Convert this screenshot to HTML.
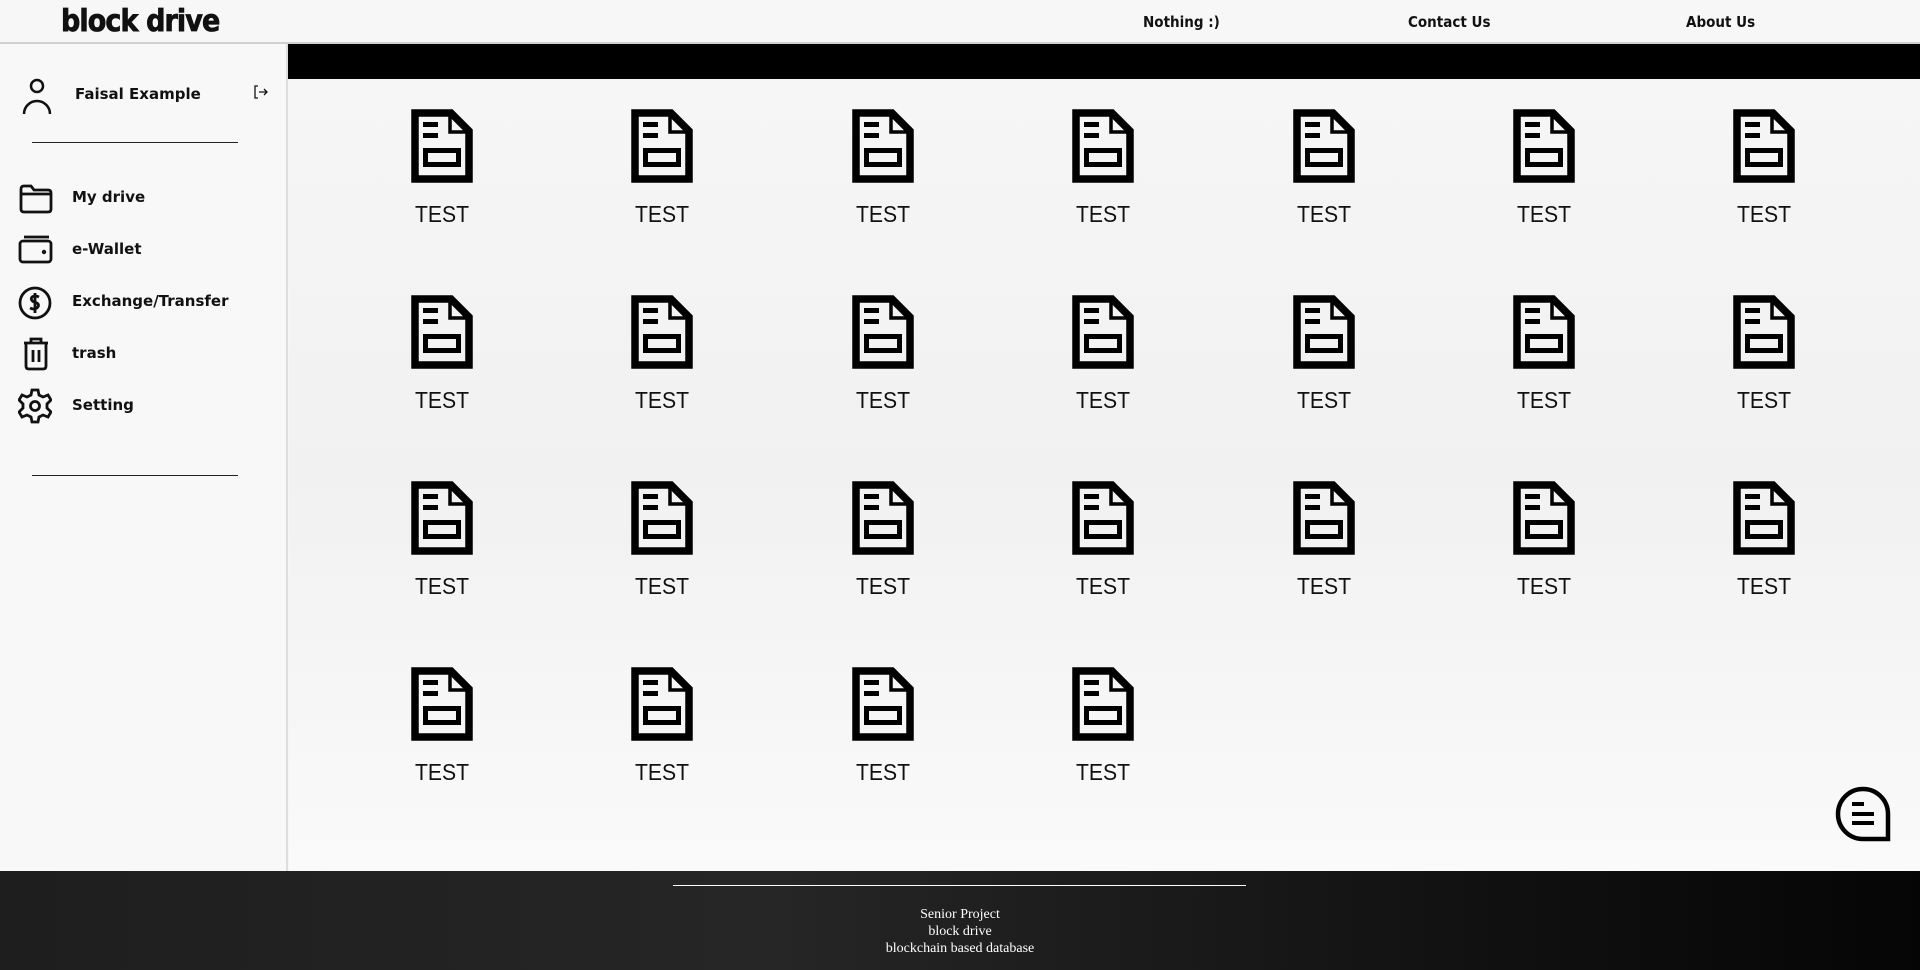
<!DOCTYPE html>
<html><head><meta charset="utf-8">
<style>
*{margin:0;padding:0;box-sizing:border-box}
body{width:1920px;height:970px;overflow:hidden;background:#f5f5f5;font-family:"DejaVu Sans","Liberation Sans",sans-serif;position:relative}
.header{position:absolute;left:0;top:0;width:1920px;height:44px;background:#f7f7f7;border-bottom:2px solid #d0d0d0}
.logo{position:absolute;left:61px;top:4px;font-family:"DejaVu Sans",sans-serif;font-weight:900;font-size:30px;letter-spacing:-1px;color:#111;transform:scaleX(0.9);transform-origin:left;-webkit-text-stroke:0.8px #111}
.nav{position:absolute;top:13px;font-weight:bold;font-size:15px;color:#111;font-family:"DejaVu Sans Condensed","DejaVu Sans",sans-serif}
.side{position:absolute;left:0;top:44px;width:288px;height:827px;background:#f8f8f8;border-right:2px solid #ddd}
.bar{position:absolute;left:288px;top:44px;width:1632px;height:35px;background:#000}
.main{position:absolute;left:289px;top:79px;width:1631px;height:792px;background:linear-gradient(180deg,#f6f6f6 0%,#f1f1f1 50%,#fafafa 100%)}
.name{position:absolute;left:75px;top:85px;font-weight:bold;font-size:15px;color:#111}
.hr{position:absolute;left:32px;width:206px;border-top:1.5px solid #222}
.mi{position:absolute;left:72px;font-weight:bold;font-size:15px;color:#111}
.ic{position:absolute;left:18px}
.file{position:absolute;width:120px;text-align:center}
.file svg{display:block;margin:0 auto}
.file span{display:block;font-family:"Liberation Sans",sans-serif;font-size:23px;color:#111;margin-top:18px;transform:scaleX(0.92)}
.footer{position:absolute;left:0;top:871px;width:1920px;height:99px;background:linear-gradient(90deg,#1e1e1e 0%,#262626 40%,#121212 75%,#050505 100%)}
.fhr{position:absolute;left:673px;top:14px;width:573px;border-top:1.5px solid #fff}
.ftxt{position:absolute;left:0;width:1920px;top:35px;text-align:center;color:#fff;font-family:"Liberation Serif",serif;font-size:14px;line-height:17px}
</style></head><body>
<div class="header">
<div class="logo">block drive</div>
<div class="nav" style="left:1143px">Nothing :)</div>
<div class="nav" style="left:1408px">Contact Us</div>
<div class="nav" style="left:1686px">About Us</div>
</div>
<div class="side">
<svg class="ic" style="left:20px;top:33px" width="34" height="38" viewBox="0 0 34 38" fill="none" stroke="#111" stroke-width="2.5"><circle cx="17" cy="9" r="6"/><path d="M4 37 A13 13 0 0 1 30 37"/></svg>
<svg style="position:absolute;left:253px;top:40px" width="16" height="16" viewBox="0 0 16 16" fill="none" stroke="#111" stroke-width="1.3"><path d="M5 2H2V14H5M6 8H14M11 5L14 8L11 11"/></svg>
<div class="hr" style="top:98px"></div>
<svg class="ic" style="top:139px" width="36" height="32" viewBox="0 0 36 32" fill="none" stroke="#111" stroke-width="2.8"><path d="M3 6Q3 3 6 3H13L16 7H30Q33 7 33 10V26Q33 29 30 29H6Q3 29 3 26Z"/><path d="M3 11H33"/></svg>
<svg class="ic" style="top:191px" width="36" height="30" viewBox="0 0 36 30" fill="none" stroke="#111" stroke-width="2.8"><path d="M6 2H31"/><rect x="2" y="6" width="31" height="21" rx="3"/><circle cx="26" cy="17" r="0.8" fill="#111"/></svg>
<svg class="ic" style="top:241px" width="36" height="36" viewBox="0 0 36 36" fill="none" stroke="#111" stroke-width="2.8"><circle cx="17" cy="18" r="15"/><path d="M21 12Q17 10 14 12Q12 15 16 17L19 18Q22 20 19 23Q16 25 12 23M17 8V28"/></svg>
<svg class="ic" style="left:22px;top:291px" width="28" height="36" viewBox="0 0 28 36" fill="none" stroke="#111" stroke-width="2.8"><path d="M2 8H26M9 8V4H19V8M4 8V31Q4 34 7 34H21Q24 34 24 31V8M11 15V27M17 15V27"/></svg>
<svg class="ic" style="top:344px" width="34" height="36" viewBox="0 0 34 36" fill="none" stroke="#111" stroke-width="2.8"><path d="M14 2H20L21 7L25 9L30 7L33 12L29 16V20L33 24L30 29L25 27L21 29L20 34H14L13 29L9 27L4 29L1 24L5 20V16L1 12L4 7L9 9L13 7Z"/><circle cx="17" cy="18" r="4.5"/></svg>
<div class="hr" style="top:431px"></div>
</div>
<div class="name">Faisal Example</div>
<div class="mi" style="top:188px">My drive</div>
<div class="mi" style="top:240px">e-Wallet</div>
<div class="mi" style="top:292px">Exchange/Transfer</div>
<div class="mi" style="top:344px">trash</div>
<div class="mi" style="top:396px">Setting</div>
<div class="bar"></div>
<div class="main"></div>
<div id="files"></div>
<svg style="position:absolute;left:1834px;top:785px" width="58" height="58" viewBox="0 0 58 58" fill="none" stroke="#000" stroke-width="4.5"><path d="M54 54V29A25 25 0 1 0 29 54Z"/><path d="M18 19H30M18 29H40M18 38H40" stroke-width="4"/></svg>
<div class="footer"><div class="fhr"></div><div class="ftxt">Senior Project<br>block drive<br>blockchain based database</div></div>
<script>
var xs=[442,662,883,1103,1324,1544,1764],ys=[109,295,481,667],h='';
var ic='<svg width="62" height="74" viewBox="0 0 62 74" fill="none" stroke="#000"><path d="M4 4H40L58 22V70H4Z" stroke-width="7.5" stroke-linejoin="miter"/><path d="M39 5V23H56" stroke-width="3.5"/><rect x="12" y="13" width="15" height="5" fill="#000" stroke="none"/><rect x="12" y="24" width="15" height="5" fill="#000" stroke="none"/><rect x="14.5" y="41.5" width="33" height="14" stroke-width="5"/></svg>';
for(var r=0;r<4;r++)for(var c=0;c<7;c++){if(r==3&&c>3)break;h+='<div class="file" style="left:'+(xs[c]-60)+'px;top:'+ys[r]+'px">'+ic+'<span>TEST</span></div>';}
document.getElementById('files').innerHTML=h;
</script>
</body></html>
